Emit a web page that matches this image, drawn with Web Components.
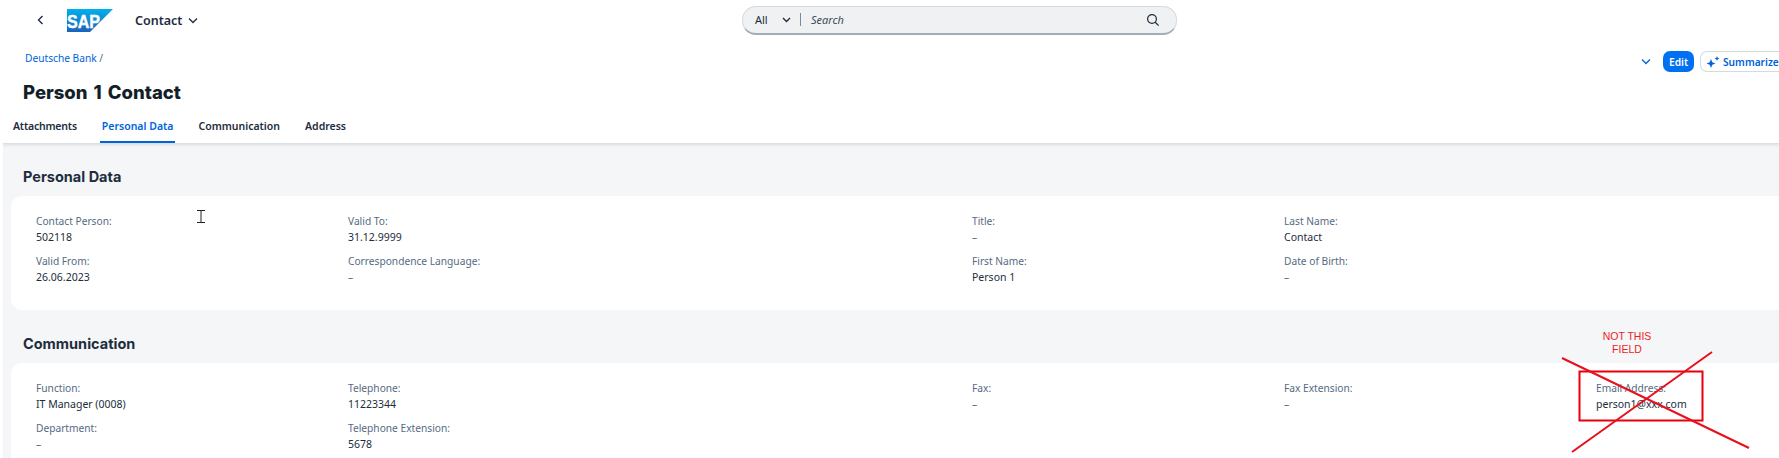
<!DOCTYPE html>
<html>
<head>
<meta charset="utf-8">
<title>Person 1 Contact</title>
<style>
    html, body { margin: 0; height: 458px; overflow: hidden; background: #fff; }
    body { font-family: "Noto Sans", "Liberation Sans", sans-serif; color: #1d2d3e; }
</style>
</head>
<body>
<shell-bar></shell-bar>
<object-header></object-header>
<tab-bar></tab-bar>
<page-content>
    <page-section heading="Personal Data">
        <form-field label="Contact Person:">502118</form-field>
        <form-field label="Valid To:">31.12.9999</form-field>
        <span></span>
        <form-field label="Title:" muted>–</form-field>
        <form-field label="Last Name:">Contact</form-field>
        <span></span>
        <form-field label="Valid From:">26.06.2023</form-field>
        <form-field label="Correspondence Language:" muted>–</form-field>
        <span></span>
        <form-field label="First Name:">Person 1</form-field>
        <form-field label="Date of Birth:" muted>–</form-field>
    </page-section>
    <page-section heading="Communication">
        <form-field label="Function:">IT Manager (0008)</form-field>
        <form-field label="Telephone:">11223344</form-field>
        <span></span>
        <form-field label="Fax:" muted>–</form-field>
        <form-field label="Fax Extension:" muted>–</form-field>
        <form-field label="Email Address:">person1@xxx.com</form-field>
        <form-field label="Department:" muted>–</form-field>
        <form-field label="Telephone Extension:">5678</form-field>
    </page-section>
</page-content>
<red-markup></red-markup>

<script>
class ShellBar extends HTMLElement {
    connectedCallback() {
        this.attachShadow({ mode: 'open' });
        this.shadowRoot.innerHTML = `
            <style>
                :host { display: grid; grid-template-columns: 742px 435px 1fr; height: 40px; align-items: center; }
                .left { display: flex; align-items: center; padding-left: 36px; }
                .back { width: 9px; height: 12px; }
                .logo { width: 46px; height: 23px; margin-left: 22px; }
                .app { font-size: 12.5px; font-weight: 600; margin-left: 22px; }
                .chev { width: 10px; height: 7px; margin-left: 6px; }
                .search {
                    display: flex; align-items: center; height: 26px;
                    background: #eff1f2; border: 1px solid #d5dadd; border-bottom: 2px solid #a3adb8;
                    border-radius: 14px; padding: 0 16px 0 12px; font-size: 11px;
                }
                .all { width: 26px; }
                .arrow { width: 9px; height: 6px; margin-left: 1px; }
                .bar { width: 1px; height: 13px; background: #758ca4; margin: 0 10px 0 9px; }
                em { flex: 1; color: #3b4b5c; }
                .mag { width: 14px; height: 14px; }
            </style>
            <div class="left">
                <svg class="back" viewBox="0 0 9 12"><path d="M6.5 2 L2.500 6 L6.500 10" fill="none" stroke="#1d2d3e" stroke-width="1.4"/></svg>
                <svg class="logo" viewBox="0 0 46 23">
                    <defs><linearGradient id="g" x1="0" y1="0" x2="0" y2="1"><stop offset="0" stop-color="#00b1eb"/><stop offset="1" stop-color="#1d61bc"/></linearGradient></defs>
                    <path d="M0 0 H46 L23 23 H0 Z" fill="url(#g)"/>
                    <text x="0" y="18.500" font-family="Liberation Sans" font-size="18" font-weight="700" fill="#fff" stroke="#fff" stroke-width=".4" textLength="33" lengthAdjust="spacingAndGlyphs">SAP</text>
                </svg>
                <span class="app">Contact</span>
                <svg class="chev" viewBox="0 0 10 7"><path d="M1 1.500 L5 5.500 L9 1.500" fill="none" stroke="#1d2d3e" stroke-width="1.3"/></svg>
            </div>
            <div class="search">
                <span class="all">All</span>
                <svg class="arrow" viewBox="0 0 9 6"><path d="M1 1 L4.500 4.500 L8 1" fill="none" stroke="#1d2d3e" stroke-width="1.4"/></svg>
                <span class="bar"></span>
                <em>Search</em>
                <svg class="mag" viewBox="0 0 14 14"><circle cx="6" cy="6" r="4.400" fill="none" stroke="#1d2d3e" stroke-width="1.2"/><path d="M9.200 9.200 L12.600 12.600" stroke="#1d2d3e" stroke-width="1.3"/></svg>
            </div>
            <div></div>
        `;
    }
}

class ObjectHeader extends HTMLElement {
    connectedCallback() {
        this.attachShadow({ mode: 'open' });
        this.shadowRoot.innerHTML = `
            <style>
                :host { display: block; height: 71px; padding: 10px 0 0 23px; box-sizing: border-box; position: relative; }
                .top { display: flex; justify-content: space-between; align-items: flex-start; height: 30px; }
                .crumb { font-size: 10.2px; color: #0064d9; padding: 1px 0 0 2px; }
                .crumb i { font-style: normal; color: #556b82; }
                .actions { display: flex; align-items: center; height: 21px; margin-top: 1px; }
                .toggle { width: 10px; height: 7px; margin-right: 12px; }
                .edit { width: 31px; height: 21px; border-radius: 7px; background: #0070f2; color: #fff; font-size: 10.2px; font-weight: 600; display: grid; place-items: center; margin-right: 6px; }
                .ai { height: 21px; width: 79px; border: 1px solid #d5dadd; border-right: 0; border-radius: 7px 0 0 7px; display: flex; align-items: center; gap: 3px; padding-left: 5px; box-sizing: border-box; color: #0064d9; font-size: 10.2px; font-weight: 600; white-space: nowrap; }
                .ai svg { width: 14px; height: 14px; flex: none; }
                h1 { margin: 0; font-family: Inter, sans-serif; font-size: 18.5px; word-spacing: 2px; line-height: 24px; font-weight: 800; color: #131e29; }
            </style>
            <div class="top">
                <span class="crumb">Deutsche Bank <i>/</i></span>
                <div class="actions">
                    <svg class="toggle" viewBox="0 0 10 7"><path d="M1 1.500 L5 5.500 L9 1.500" fill="none" stroke="#0064d9" stroke-width="1.3"/></svg>
                    <span class="edit">Edit</span>
                    <span class="ai">
                        <svg viewBox="0 0 14 14"><path d="M5 4 L6.300 7.200 L9.500 8.500 L6.300 9.800 L5 13 L3.700 9.800 L.5 8.500 L3.700 7.200 Z M11 1 L11.700 2.800 L13.500 3.500 L11.700 4.200 L11 6 L10.300 4.200 L8.500 3.500 L10.300 2.800 Z" fill="#0064d9"/></svg>
                        Summarize
                    </span>
                </div>
            </div>
            <h1>Person 1 Contact</h1>
        `;
    }
}

class TabBar extends HTMLElement {
    connectedCallback() {
        this.attachShadow({ mode: 'open' });
        this.shadowRoot.innerHTML = `
            <style>
                :host { display: flex; height: 32px; margin-top: -1px; padding-top: 1px; box-sizing: content-box; padding-left: 13px; gap: 25px; font-size: 10.5px; font-weight: 600; }
                span { display: block; line-height: 30px; height: 32px; box-sizing: border-box; padding: 0; color: #1d2d3e; white-space: nowrap; }
                .first { letter-spacing: -.2px; }
                .on { color: #0064d9; border-bottom: 2px solid #0064d9; margin: 0 -2px; padding: 0 2px; }
            </style>
            <span class="first">Attachments</span>
            <span class="on">Personal Data</span>
            <span>Communication</span>
            <span>Address</span>
        `;
    }
}

class PageContent extends HTMLElement {
    connectedCallback() {
        this.attachShadow({ mode: 'open' });
        this.shadowRoot.innerHTML = `
            <style>
                :host { display: block; margin-left: 3px; background: #f5f6f7; box-shadow: inset 0 4px 4px -3px rgba(29,45,62,.18); height: 315px; overflow: hidden; }
            </style>
            <slot></slot>
        `;
    }
}

class PageSection extends HTMLElement {
    connectedCallback() {
        this.attachShadow({ mode: 'open' });
        this.shadowRoot.innerHTML = `
            <style>
                :host { display: block; padding: 20px 0 0 8px; }
                h2 { margin: 0 0 0 12px; font-family: Inter, sans-serif; font-size: 14.5px; line-height: 28px; font-weight: 700; color: #1d2d3e; }
                .card { margin-top: 5px; background: #fff; border-radius: 11px 0 0 11px; height: 114px; box-sizing: border-box; padding: 17px 0 0 25px; display: grid; grid-template-columns: repeat(6, 312px); grid-auto-rows: 40px; }
            </style>
            <h2>${this.getAttribute('heading')}</h2>
            <div class="card"><slot></slot></div>
        `;
    }
}

class FormField extends HTMLElement {
    connectedCallback() {
        this.attachShadow({ mode: 'open' });
        const muted = this.hasAttribute('muted') ? 'muted' : '';
        this.shadowRoot.innerHTML = `
            <style>
                :host { display: block; font-size: 10.5px; line-height: 16px; }
                .label { color: #556b82; font-size: 10.2px; }
                .value { color: #1d2d3e; }
                .muted { color: #556b82; }
            </style>
            <div class="label">${this.getAttribute('label')}</div>
            <div class="value ${muted}"><slot></slot></div>
        `;
    }
}

class RedMarkup extends HTMLElement {
    connectedCallback() {
        this.attachShadow({ mode: 'open' });
        this.shadowRoot.innerHTML = `
            <style>
                :host { position: absolute; left: 0; top: 0; width: 1779px; height: 458px; pointer-events: none; }
                svg { position: absolute; inset: 0; width: 1779px; height: 458px; }
                text { font-family: "Liberation Sans", sans-serif; font-size: 10.5px; fill: #ee1c25; text-anchor: middle; }
            </style>
            <svg viewBox="0 0 1779 458">
                <path d="M201 211 V222 M197 210.500 H205 M197 222.500 H205" fill="none" stroke="#222" stroke-width="1"/>
                <text x="1627" y="340">NOT THIS</text>
                <text x="1627" y="353">FIELD</text>
                <rect x="1579.500" y="371.500" width="123" height="49" fill="none" stroke="#e8000d" stroke-width="2"/>
                <path d="M1562 358 L1749 448 M1572 452 L1712 352" fill="none" stroke="#e8101c" stroke-width="2"/>
            </svg>
        `;
    }
}

customElements.define('shell-bar', ShellBar);
customElements.define('object-header', ObjectHeader);
customElements.define('tab-bar', TabBar);
customElements.define('page-content', PageContent);
customElements.define('page-section', PageSection);
customElements.define('form-field', FormField);
customElements.define('red-markup', RedMarkup);
</script>
</body>
</html>
